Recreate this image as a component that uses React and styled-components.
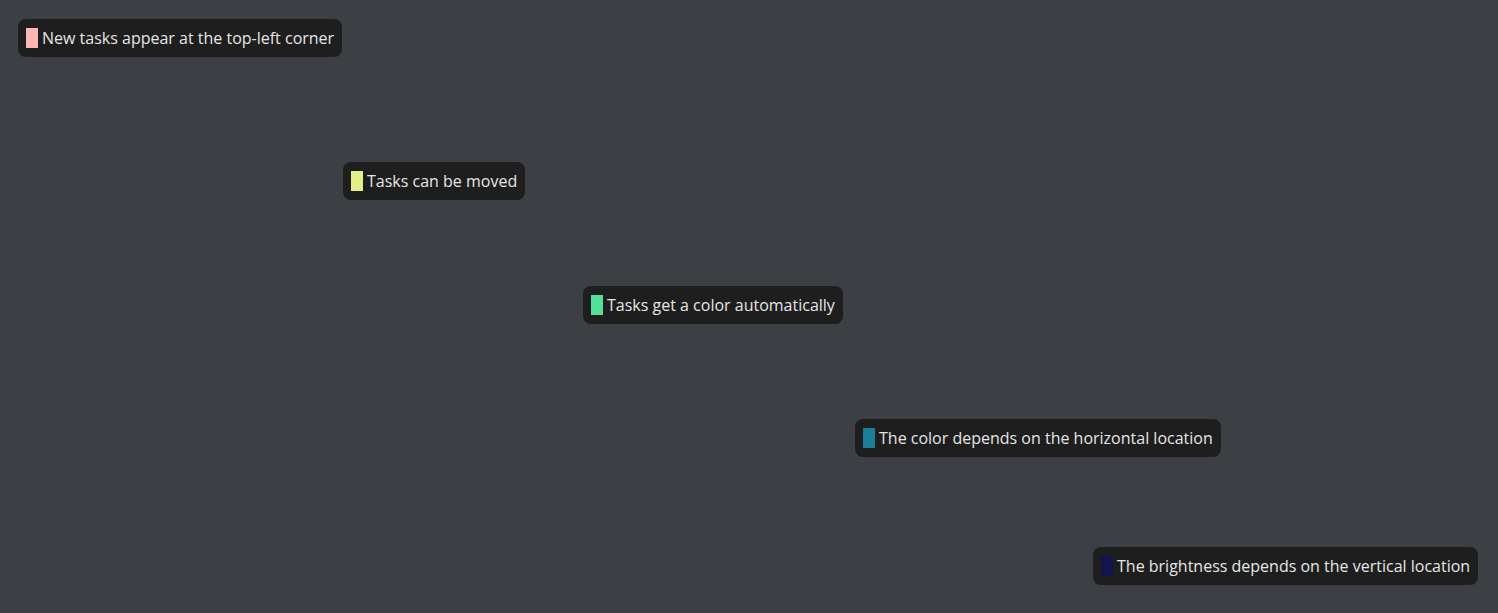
import React from "react";
import styled, { createGlobalStyle } from "styled-components";

const GlobalStyle = createGlobalStyle`
  html, body {
    margin: 0;
    padding: 0;
    background: #3c3f43;
    font-family: "Open Sans", "Noto Sans", sans-serif;
  }
`;

const tasks = [
  { id: 1, text: "New tasks appear at the top-left corner", x: 18, y: 19, color: "#ffb5b3" },
  { id: 2, text: "Tasks can be moved", x: 343, y: 162, color: "#e5ef88" },
  { id: 3, text: "Tasks get a color automatically", x: 583, y: 286, color: "#52df99" },
  { id: 4, text: "The color depends on the horizontal location", x: 855, y: 419, color: "#1c7f97" },
  { id: 5, text: "The brightness depends on the vertical location", x: 1093, y: 547, color: "#12134f" },
];

const Canvas = styled.div`
  position: relative;
  width: 100vw;
  height: 100vh;
  overflow: hidden;
  background: #3c3f43;
`;

const Task = styled.div`
  position: absolute;
  display: flex;
  align-items: center;
  gap: 4px;
  height: 38px;
  box-sizing: border-box;
  padding: 0 8px;
  background: #1e1e1e;
  border-radius: 8px;
  color: #e6e6e6;
  font-size: 16px;
  white-space: nowrap;
  cursor: grab;
`;

const Swatch = styled.span`
  display: block;
  width: 12px;
  height: 20px;
  background: ${({ color }) => color};
`;

const App = () => {
  return (
    <>
      <GlobalStyle />
      <Canvas>
        {tasks.map(task => (
          <Task key={task.id} style={{ left: task.x, top: task.y }}>
            <Swatch color={task.color} />
            {task.text}
          </Task>
        ))}
      </Canvas>
    </>
  );
};

export default App;
